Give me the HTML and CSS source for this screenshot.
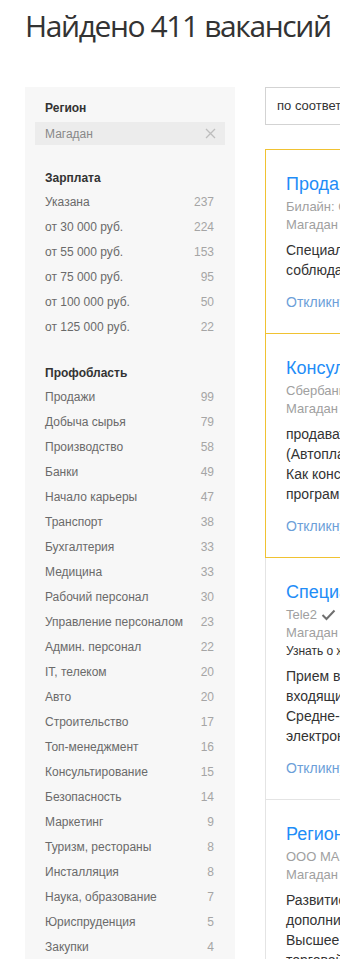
FILE: index.html
```html
<!DOCTYPE html>
<html lang="ru">
<head>
<meta charset="utf-8">
<title>Вакансии</title>
<link rel="stylesheet" href="styles.css">
</head>
<body>
<div class="page">
  <h1 class="page-title">Найдено 411 вакансий</h1>
  <div class="layout">
    <aside class="filters">
      <section class="filter">
        <h3 class="filter-title">Регион</h3>
        <div class="chip"><span>Магадан</span><svg class="chip-x" width="11" height="11" viewBox="0 0 11 11"><path d="M1 1 L10 10 M10 1 L1 10" stroke="#bdbdbd" stroke-width="1.3" fill="none"/></svg></div>
      </section>
      <section class="filter">
        <h3 class="filter-title">Зарплата</h3>
        <ul class="opts">
          <li><span>Указана</span><span class="cnt">237</span></li>
          <li><span>от 30 000 руб.</span><span class="cnt">224</span></li>
          <li><span>от 55 000 руб.</span><span class="cnt">153</span></li>
          <li><span>от 75 000 руб.</span><span class="cnt">95</span></li>
          <li><span>от 100 000 руб.</span><span class="cnt">50</span></li>
          <li><span>от 125 000 руб.</span><span class="cnt">22</span></li>
        </ul>
      </section>
      <section class="filter">
        <h3 class="filter-title">Профобласть</h3>
        <ul class="opts">
          <li><span>Продажи</span><span class="cnt">99</span></li>
          <li><span>Добыча сырья</span><span class="cnt">79</span></li>
          <li><span>Производство</span><span class="cnt">58</span></li>
          <li><span>Банки</span><span class="cnt">49</span></li>
          <li><span>Начало карьеры</span><span class="cnt">47</span></li>
          <li><span>Транспорт</span><span class="cnt">38</span></li>
          <li><span>Бухгалтерия</span><span class="cnt">33</span></li>
          <li><span>Медицина</span><span class="cnt">33</span></li>
          <li><span>Рабочий персонал</span><span class="cnt">30</span></li>
          <li><span>Управление персоналом</span><span class="cnt">23</span></li>
          <li><span>Админ. персонал</span><span class="cnt">22</span></li>
          <li><span>IT, телеком</span><span class="cnt">20</span></li>
          <li><span>Авто</span><span class="cnt">20</span></li>
          <li><span>Строительство</span><span class="cnt">17</span></li>
          <li><span>Топ-менеджмент</span><span class="cnt">16</span></li>
          <li><span>Консультирование</span><span class="cnt">15</span></li>
          <li><span>Безопасность</span><span class="cnt">14</span></li>
          <li><span>Маркетинг</span><span class="cnt">9</span></li>
          <li><span>Туризм, рестораны</span><span class="cnt">8</span></li>
          <li><span>Инсталляция</span><span class="cnt">8</span></li>
          <li><span>Наука, образование</span><span class="cnt">7</span></li>
          <li><span>Юриспруденция</span><span class="cnt">5</span></li>
          <li><span>Закупки</span><span class="cnt">4</span></li>
        </ul>
      </section>
    </aside>
    <main class="results">
      <div class="sort">по соответствию</div>
      <div class="cards">
        <article class="card hl">
          <a class="card-title">Продавец-консультант</a>
          <div class="meta">Билайн: Салоны связи</div>
          <div class="meta">Магадан</div>
          <p class="desc">Специалист по продажам и обслуживанию клиентов<br>соблюдать стандарты обслуживания</p>
          <a class="respond">Откликнуться</a>
        </article>
        <article class="card hl">
          <a class="card-title">Консультант по продажам</a>
          <div class="meta">Сбербанк</div>
          <div class="meta">Магадан</div>
          <p class="desc">продавать продукты банка<br>(Автоплатеж, Мобильный банк).<br>Как консультант вы будете участвовать в<br>программе развития</p>
          <a class="respond">Откликнуться</a>
        </article>
        <article class="card">
          <a class="card-title">Специалист офиса продаж</a>
          <div class="meta">Tele2 <svg class="check" width="15" height="12" viewBox="0 0 15 12"><path d="M1.5 6 L5.5 10 L13.5 1.5" fill="none" stroke="#6f6f6f" stroke-width="2"/></svg></div>
          <div class="meta">Магадан</div>
          <div class="note">Узнать о жизни в компании</div>
          <p class="desc">Прием входящих звонков и обработка<br>входящих обращений клиентов.<br>Средне-специальное образование<br>электронная почта</p>
          <a class="respond">Откликнуться</a>
        </article>
        <article class="card">
          <a class="card-title">Региональный представитель</a>
          <div class="meta">ООО МАЙ</div>
          <div class="meta">Магадан</div>
          <p class="desc">Развитие территории<br>дополнительные продажи<br>Высшее образование<br>торговой сети</p>
          <a class="respond">Откликнуться</a>
        </article>
      </div>
    </main>
  </div>
</div>
</body>
</html>
```

FILE: styles.css
```css
html, body {
  margin: 0;
  padding: 0;
  overflow: hidden;
  background: #fff;
}
body {
  font-family: "Liberation Sans", Arial, sans-serif;
  color: #333;
}
.page {
  padding: 6px 25px 0 25px;
  width: 920px;
}
.page-title {
  margin: 0 0 41px 0;
  font-family: "Open Sans", sans-serif;
  font-weight: 400;
  font-size: 30px;
  line-height: 40px;
  letter-spacing: -1.4px;
  color: #333;
}
.layout {
  display: flex;
  gap: 30px;
  align-items: flex-start;
}
.filters {
  width: 210px;
  flex-shrink: 0;
  background: #f7f7f7;
  padding: 12px 0 40px 0;
  min-height: 900px;
}
.filter {
  margin-bottom: 24px;
}
.filter-title {
  margin: 0 0 3px 0;
  padding: 0 20px;
  font-size: 12px;
  line-height: 18px;
  font-weight: 700;
  color: #333;
}
.chip {
  margin: 5px 10px 0 10px;
  height: 23px;
  padding: 0 9px 0 10px;
  background: #ececec;
  display: flex;
  justify-content: space-between;
  align-items: center;
  font-size: 12px;
  color: #888;
}
.chip-x {
  display: block;
}
.opts {
  list-style: none;
  margin: 0;
  padding: 0 21px 0 20px;
}
.opts li {
  display: flex;
  justify-content: space-between;
  height: 25px;
  line-height: 25px;
  font-size: 12px;
  color: #6a6a6a;
}
.cnt {
  color: #a5a5a5;
}
.results {
  width: 620px;
  flex-shrink: 0;
}
.sort {
  box-sizing: border-box;
  height: 38px;
  border: 1px solid #d3d3d3;
  padding: 0 11px;
  line-height: 36px;
  font-size: 13px;
  color: #333;
}
.cards {
  margin-top: 25px;
}
.card {
  margin-top: -1px;
  border: 1px solid #e4e4e4;
  padding: 22px 20px 21px 20px;
  background: #fff;
}
.card.hl {
  border-color: #f0c232;
  position: relative;
  z-index: 1;
}
.card-title {
  display: block;
  font-size: 18px;
  line-height: 24px;
  color: #1f8df7;
  margin-bottom: 2px;
}
.meta {
  font-size: 13px;
  line-height: 18px;
  color: #a0a0a0;
  display: flex;
  align-items: center;
  gap: 4px;
}
.check {
  display: block;
}
.note {
  font-size: 12px;
  line-height: 18px;
  color: #333;
}
.desc {
  margin: 6px 0 0 0;
  font-size: 14px;
  line-height: 20px;
  color: #333;
}
.respond {
  display: block;
  margin-top: 12px;
  font-size: 14px;
  line-height: 20px;
  color: #6c9fd9;
}
```
